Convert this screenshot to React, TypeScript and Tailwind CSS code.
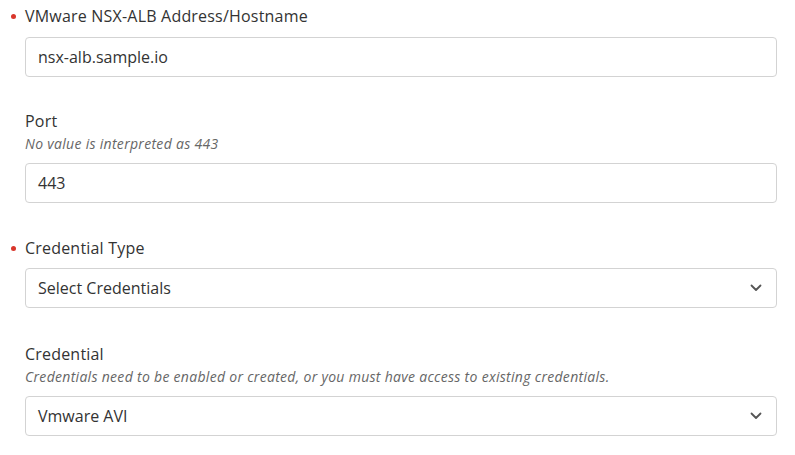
import React from 'react';

const font = { fontFamily: '"Open Sans", Lato, sans-serif' };

const Label = ({ text, required }: { text: string; required?: boolean }) => (
  <div className="relative h-[24px] leading-[24px] text-[16px] tracking-[0.2px] text-[#333333]">
    {required && <span className="absolute -left-[14px] top-[10px] w-[5px] h-[5px] rounded-full bg-[#d9362b]" />}
    {text}
  </div>
);

const Hint = ({ text }: { text: string }) => (
  <div className="h-[20px] leading-[20px] mt-[1px] text-[14px] tracking-[0.3px] italic text-[#666666]">{text}</div>
);

const TextBox = ({ value }: { value: string }) => (
  <div className="h-[40px] border border-[#d3d3d3] rounded-[4px] bg-white px-[12px] flex items-center text-[16px] text-[#333333]">
    {value}
  </div>
);

const SelectBox = ({ value }: { value: string }) => (
  <div className="h-[40px] border border-[#d3d3d3] rounded-[4px] bg-white pl-[12px] pr-[14px] flex items-center justify-between text-[16px] text-[#333333]">
    <span>{value}</span>
    <svg width="12" height="8" viewBox="0 0 12 8" fill="none">
      <path d="M1.5 1.5 L6 6 L10.5 1.5" stroke="#555555" strokeWidth="1.8" strokeLinecap="round" strokeLinejoin="round" />
    </svg>
  </div>
);

export default function App() {
  return (
    <div className="w-[795px] h-[455px] bg-white pt-[4px] pl-[25px] pr-[18px]" style={font}>
      <div>
        <Label text="VMware NSX-ALB Address/Hostname" required />
        <div className="mt-[9px]"><TextBox value="nsx-alb.sample.io" /></div>
      </div>
      <div className="mt-[32px]">
        <Label text="Port" />
        <Hint text="No value is interpreted as 443" />
        <div className="mt-[9px]"><TextBox value="443" /></div>
      </div>
      <div className="mt-[33px]">
        <Label text="Credential Type" required />
        <div className="mt-[8px]"><SelectBox value="Select Credentials" /></div>
      </div>
      <div className="mt-[34px]">
        <Label text="Credential" />
        <Hint text="Credentials need to be enabled or created, or you must have access to existing credentials." />
        <div className="mt-[9px]"><SelectBox value="Vmware AVI" /></div>
      </div>
    </div>
  );
}
